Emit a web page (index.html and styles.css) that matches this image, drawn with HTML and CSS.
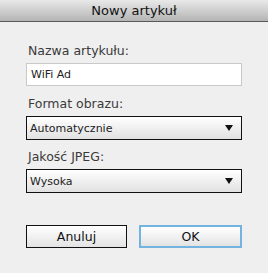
FILE: index.html
```html
<!DOCTYPE html>
<html lang="pl">

<head>
    <meta charset="UTF-8">
    <meta name="viewport" content="width=device-width, initial-scale=1.0">
    <title>Nowy artykuł</title>

    <link rel="stylesheet" href="styles.css">
</head>

<body>
    <div class="dialog">
        <div class="titlebar">Nowy artykuł</div>
        <div class="content">
            <label class="field-label" for="name">Nazwa artykułu:</label>
            <input class="text-input" id="name" type="text" value="WiFi Ad">

            <label class="field-label">Format obrazu:</label>
            <div class="select">
                <span>Automatycznie</span>
                <span class="arrow"></span>
            </div>

            <label class="field-label">Jakość JPEG:</label>
            <div class="select">
                <span>Wysoka</span>
                <span class="arrow"></span>
            </div>

            <div class="buttons">
                <button class="button">Anuluj</button>
                <button class="button default">OK</button>
            </div>
        </div>
    </div>
</body>

</html>
```

FILE: styles.css
```css
* {
    box-sizing: border-box;
    margin: 0;
    padding: 0;
}

body {
    background-color: #efefef;
    font-family: "DejaVu Sans", "Liberation Sans", sans-serif;
    color: #222;
}

.dialog {
    width: 268px;
    height: 273px;
    display: flex;
    flex-direction: column;
}

.titlebar {
    height: 22px;
    line-height: 21px;
    text-align: center;
    font-size: 13px;
    color: #111;
    background: linear-gradient(#e9e9e9, #b4b4b4);
    border-bottom: 1px solid #5a5a5a;
}

.content {
    display: flex;
    flex-direction: column;
    padding: 21px 26px 0 26px;
}

.field-label {
    font-size: 12.5px;
    line-height: 16px;
    color: #3a3a3a;
    margin-bottom: 4px;
    padding-left: 2px;
}

.text-input {
    height: 23px;
    border: 1px solid #c9c9c9;
    background: #fff;
    font-family: inherit;
    font-size: 11px;
    color: #222;
    padding: 0 4px;
    margin-bottom: 10px;
    outline: none;
}

.select {
    height: 24px;
    display: flex;
    align-items: center;
    justify-content: space-between;
    border: 1px solid #111;
    background: linear-gradient(#ffffff, #e1e1e1);
    font-size: 11px;
    color: #222;
    padding: 0 8px 0 3px;
    margin-bottom: 9px;
}

.arrow {
    width: 0;
    height: 0;
    border-left: 4px solid transparent;
    border-right: 4px solid transparent;
    border-top: 6px solid #111;
}

.buttons {
    display: flex;
    gap: 12px;
    margin-top: 23px;
}

.button {
    flex: 1;
    height: 23px;
    border: 1px solid #111;
    background: linear-gradient(#ffffff, #e3e3e3);
    font-family: inherit;
    font-size: 12.5px;
    color: #111;
}

.button.default {
    border: 2px solid #72b3df;
}
```
